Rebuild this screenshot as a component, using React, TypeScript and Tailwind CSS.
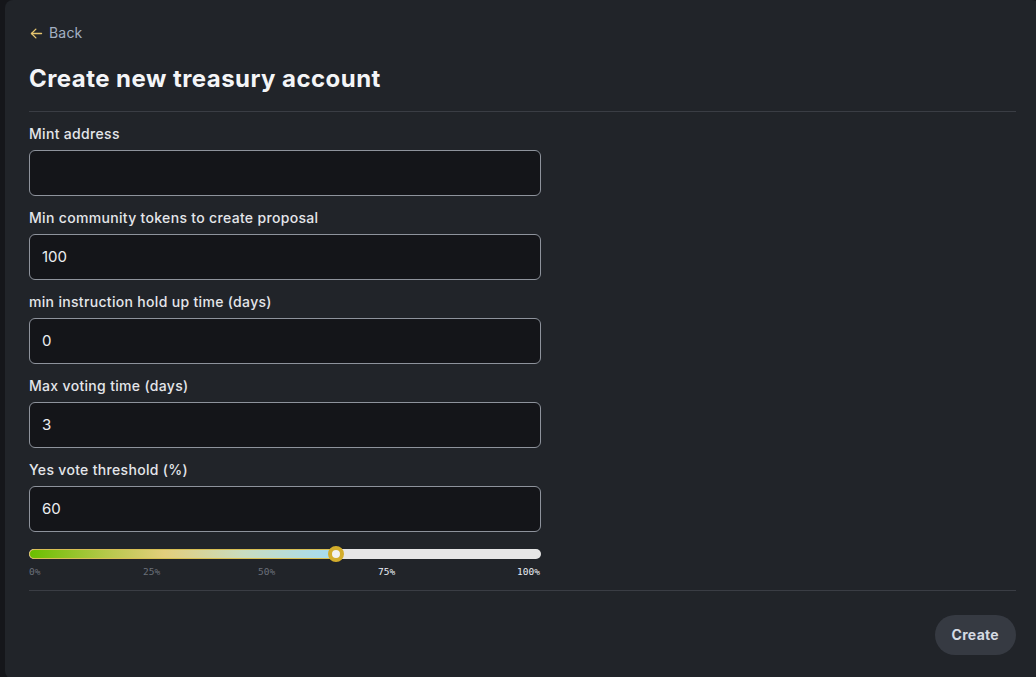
import React from "react";

const fields: { label: string; value: string }[] = [
  { label: "Mint address", value: "" },
  { label: "Min community tokens to create proposal", value: "100" },
  { label: "min instruction hold up time (days)", value: "0" },
  { label: "Max voting time (days)", value: "3" },
  { label: "Yes vote threshold (%)", value: "60" },
];

const ticks = [
  { t: "0%", left: 0, on: false },
  { t: "25%", left: 114, on: false },
  { t: "50%", left: 229, on: false },
  { t: "75%", left: 349, on: true },
  { t: "100%", left: 488, on: true },
];

export default function App() {
  return (
    <div
      className="w-[1036px] h-[677px] overflow-hidden bg-[#15161a] pl-[5px] flex"
      style={{ fontFamily: "Inter, 'Noto Sans', sans-serif" }}
    >
      <div className="w-[1035px] h-[679px] shrink-0 rounded-lg bg-[#212429] px-6 pt-[23px] flex flex-col">
        <a className="flex items-center gap-[5px] text-sm leading-5 text-[#a3b0c2] h-5">
          <svg width="15" height="15" viewBox="0 0 24 24" fill="none" stroke="#e6c56f" strokeWidth="2.2" strokeLinecap="round" strokeLinejoin="round">
            <path d="M20 12H4" />
            <path d="M11 19l-7-7 7-7" />
          </svg>
          <span className="tracking-[0.2px]">Back</span>
        </a>
        <h1 className="mt-5 text-2xl leading-8 font-bold tracking-[0.45px] text-[#f4f5f7] pb-4 border-b border-[#3a3d44]">
          Create new treasury account
        </h1>
        <div className="mt-3 w-[512px] flex flex-col gap-3">
          {fields.map((f) => (
            <div key={f.label} className="flex flex-col gap-[6px]">
              <label className="text-sm leading-5 font-medium tracking-[0.32px] text-[#e4e6ea]">{f.label}</label>
              <div className="h-[46px] rounded-md border border-[#8e939c] bg-[#141519] px-3 flex items-center text-[15px] text-[#eceef1]">
                {f.value}
              </div>
            </div>
          ))}
        </div>
        <div className="mt-[17px] w-[512px]">
          <div className="relative h-[10px] rounded-full bg-[#e6e6e6]">
            <div
              className="absolute left-0 top-0 h-[10px] w-[60%] rounded-l-full border border-[#d8bf55]"
              style={{ background: "linear-gradient(90deg, #6abf00 0%, #b5c84a 25%, #e3ce7c 44%, #c9dcc0 70%, #a6dcf2 100%)" }}
            />
            <div className="absolute left-[60%] top-1/2 -translate-x-1/2 -translate-y-1/2 w-[16px] h-[16px] rounded-full bg-[#f2f2f2] border-[4px] border-[#d3ad2c]" />
          </div>
          <div className="relative h-[12px] mt-[7px] text-[9.5px] leading-[12px]" style={{ fontFamily: "'DejaVu Sans Mono', monospace" }}>
            {ticks.map((k) => (
              <span
                key={k.t}
                className={"absolute top-0 " + (k.on ? "text-[#e8edf3]" : "text-[#6b707a]")}
                style={{ left: k.left }}
              >
                {k.t}
              </span>
            ))}
          </div>
        </div>
        <div className="mt-[12px] border-t border-[#3a3d44]" />
        <div className="mt-6 flex justify-end">
          <button className="h-10 rounded-full bg-[#363a42] px-[17px] text-sm font-bold tracking-[0.3px] text-[#d5dae2]">
            Create
          </button>
        </div>
      </div>
    </div>
  );
}
